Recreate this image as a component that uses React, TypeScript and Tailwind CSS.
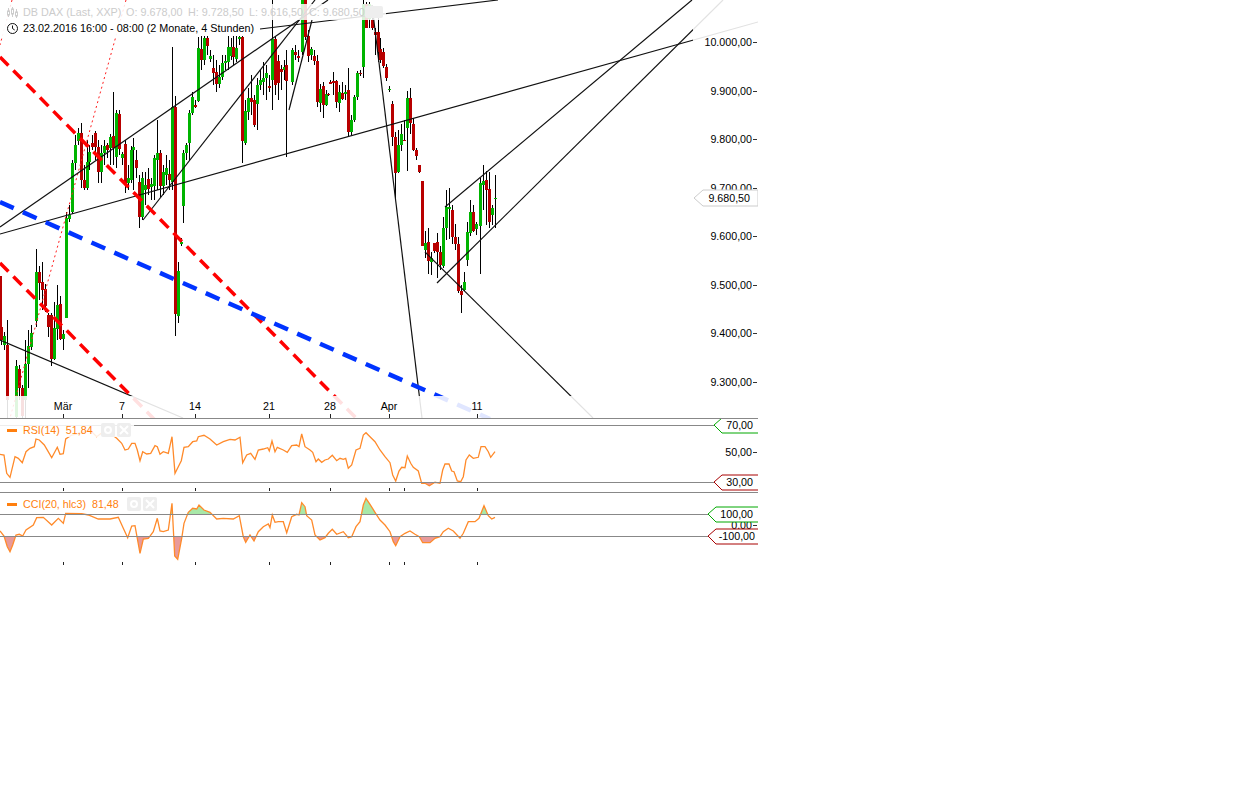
import { Fragment } from 'react';

type Candle = [number, number, number, 'g' | 'r', number, number];
type Pt = [number, number];

// x is in 3x zoom units, y in page pixels: [x, bodyTop, bodyBottom, colour, wickTop, wickBottom]
const candles: Candle[] = [
  [0, 276, 327, 'r', 276, 327], [4, 327, 340, 'r', 316, 345], [13, 336, 345, 'g', 332, 350], [22, 345, 400, 'r', 320, 418],
  [49, 366, 417, 'g', 360, 418], [58, 369, 388, 'r', 365, 400], [67, 388, 416, 'r', 385, 418], [76, 364, 400, 'g', 340, 418],
  [85, 346, 364, 'g', 330, 388], [94, 333, 347, 'g', 325, 350], [108, 272, 321, 'g', 249, 327], [118, 272, 283, 'r', 266, 300],
  [127, 282, 290, 'r', 262, 310], [136, 289, 306, 'r', 284, 312], [145, 315, 327, 'r', 313, 337], [154, 315, 359, 'r', 313, 366],
  [163, 328, 359, 'g', 302, 360], [172, 305, 329, 'g', 285, 340], [181, 304, 339, 'r', 296, 340], [190, 334, 339, 'g', 330, 350],
  [199, 218, 318, 'g', 212, 318], [208, 215, 219, 'g', 205, 222], [217, 163, 212, 'g', 160, 214], [226, 145, 163, 'g', 135, 170],
  [235, 133, 141, 'g', 128, 145], [244, 133, 180, 'r', 123, 188], [252, 180, 188, 'r', 165, 190], [260, 162, 188, 'g', 140, 190],
  [268, 152, 162, 'g', 145, 170], [277, 143, 147, 'r', 135, 150], [286, 133, 147, 'r', 131, 160], [295, 147, 172, 'r', 140, 183],
  [304, 153, 172, 'g', 145, 183], [313, 146, 153, 'g', 140, 165], [322, 145, 150, 'r', 143, 158], [331, 137, 148, 'g', 134, 165],
  [340, 136, 148, 'r', 92, 165], [349, 113, 157, 'g', 110, 168], [358, 114, 149, 'r', 110, 155], [367, 154, 158, 'g', 152, 165],
  [376, 144, 183, 'r', 140, 193], [385, 178, 183, 'g', 165, 190], [394, 150, 180, 'g', 146, 183], [400, 147, 150, 'g', 138, 190],
  [409, 160, 168, 'r', 150, 178], [418, 182, 217, 'r', 175, 228], [427, 178, 217, 'g', 172, 220], [436, 185, 190, 'g', 172, 205],
  [445, 179, 189, 'r', 168, 195], [454, 184, 187, 'g', 178, 200], [463, 158, 186, 'g', 155, 200], [472, 153, 160, 'g', 120, 190],
  [481, 153, 186, 'r', 150, 197], [490, 172, 186, 'g', 165, 195], [499, 168, 175, 'g', 155, 185], [508, 174, 180, 'r', 160, 190],
  [517, 107, 182, 'g', 47, 190], [526, 107, 314, 'r', 96, 336], [535, 271, 316, 'g', 262, 323], [544, 242, 244, 'g', 238, 246],
  [550, 153, 206, 'g', 150, 223], [559, 145, 153, 'g', 143, 160], [568, 113, 143, 'g', 110, 160], [577, 97, 113, 'g', 92, 115],
  [586, 105, 107, 'r', 100, 108], [595, 48, 101, 'g', 37, 102], [604, 49, 60, 'r', 36, 70], [613, 38, 60, 'g', 36, 65],
  [622, 38, 46, 'r', 36, 55], [631, 56, 59, 'g', 50, 62], [640, 68, 73, 'r', 55, 85], [649, 72, 84, 'r', 60, 92],
  [658, 77, 84, 'g', 65, 88], [667, 63, 77, 'g', 55, 80], [676, 61, 63, 'g', 55, 70], [685, 47, 62, 'g', 36, 70],
  [692, 47, 56, 'g', 38, 60], [700, 47, 57, 'r', 36, 65], [709, 48, 59, 'g', 36, 62], [718, 37, 39, 'g', 36, 45],
  [727, 37, 141, 'r', 36, 163], [736, 111, 143, 'g', 100, 145], [745, 98, 112, 'g', 88, 120], [754, 98, 102, 'r', 75, 115],
  [763, 100, 125, 'r', 95, 127], [772, 85, 104, 'g', 78, 130], [781, 80, 85, 'g', 70, 90], [790, 78, 82, 'g', 62, 95],
  [799, 73, 78, 'g', 65, 100], [808, 86, 88, 'r', 75, 92], [817, 39, 80, 'g', 0, 110], [826, 39, 85, 'r', 36, 95],
  [835, 61, 83, 'r', 55, 100], [844, 69, 72, 'r', 65, 90], [851, 67, 70, 'g', 60, 80], [859, 65, 81, 'r', 50, 157],
  [877, 50, 82, 'g', 48, 85], [886, 52, 55, 'r', 45, 60], [895, 56, 58, 'r', 50, 62], [905, 0, 52, 'g', 0, 55],
  [914, 0, 37, 'r', 0, 40], [923, 36, 56, 'r', 30, 62], [932, 49, 55, 'g', 47, 60], [941, 56, 61, 'r', 50, 65],
  [950, 61, 102, 'r', 55, 107], [959, 89, 103, 'g', 84, 112], [968, 86, 105, 'r', 82, 118], [977, 94, 105, 'g', 90, 106],
  [985, 94, 95, 'r', 93, 96], [991, 82, 84, 'r', 80, 84], [1000, 81, 83, 'r', 72, 95], [1009, 81, 102, 'r', 80, 108],
  [1018, 92, 103, 'g', 85, 112], [1027, 93, 99, 'r', 82, 100], [1036, 92, 94, 'g', 85, 100], [1045, 90, 132, 'r', 68, 136],
  [1054, 120, 132, 'g', 115, 135], [1063, 97, 120, 'g', 95, 122], [1072, 73, 97, 'g', 71, 100], [1081, 73, 74, 'r', 70, 76],
  [1090, 4, 67, 'g', 0, 78], [1099, 4, 28, 'r', 2, 28], [1108, 4, 19, 'g', 2, 28], [1117, 20, 28, 'r', 8, 30],
  [1126, 32, 35, 'r', 28, 55], [1135, 32, 52, 'r', 18, 62], [1141, 49, 60, 'r', 38, 63], [1150, 52, 66, 'r', 48, 68],
  [1159, 67, 78, 'r', 64, 81], [1168, 89, 90, 'g', 86, 92], [1177, 104, 137, 'r', 101, 146], [1186, 137, 173, 'r', 132, 200],
  [1195, 145, 172, 'g', 130, 173], [1204, 134, 145, 'g', 124, 151], [1213, 140, 141, 'r', 120, 141], [1222, 98, 128, 'g', 91, 171],
  [1231, 98, 123, 'r', 88, 134], [1240, 124, 150, 'r', 118, 151], [1249, 150, 156, 'r', 148, 160], [1258, 165, 172, 'r', 165, 173],
  [1267, 181, 246, 'r', 181, 246], [1275, 243, 250, 'g', 231, 258], [1283, 242, 261, 'r', 228, 274], [1292, 258, 262, 'g', 252, 275],
  [1301, 243, 251, 'r', 243, 253], [1310, 242, 252, 'r', 233, 278], [1319, 252, 265, 'r', 246, 270], [1328, 228, 266, 'g', 217, 268],
  [1337, 207, 228, 'g', 190, 240], [1346, 207, 209, 'g', 188, 239], [1355, 210, 237, 'r', 205, 244], [1364, 237, 244, 'r', 224, 250],
  [1373, 244, 291, 'r', 237, 293], [1382, 291, 295, 'r', 285, 313], [1391, 282, 290, 'g', 272, 291], [1400, 232, 260, 'g', 222, 266],
  [1409, 212, 233, 'g', 200, 236], [1418, 212, 231, 'r', 205, 232], [1427, 224, 229, 'g', 222, 235], [1441, 183, 226, 'g', 178, 274],
  [1450, 181, 185, 'g', 165, 210], [1459, 180, 190, 'r', 171, 225], [1468, 189, 222, 'r', 172, 228], [1477, 208, 215, 'g', 205, 225],
  [1486, 198, 199, 'g', 175, 228],
];

// trend lines, [x1, y1, x2, y2]
const blackLines = [
  [0, 227, 328, 0], [0, 234, 758, 22], [260, 29, 498, 0], [143, 220, 315, 0], [289, 110, 312, 20],
  [372, 5, 422, 418], [0, 340, 183, 418], [445, 207, 692, 0], [437, 283, 723, 0], [425, 252, 593, 418],
];
const redLines = [[0, 57, 360, 422], [0, 263, 155, 420]];
const dottedLines = [[12, 0, 0, 45], [126, 0, 10, 418]];

const rsiZoom: Pt[] = [
  [0, 178], [12, 180], [20, 235], [30, 247], [45, 185], [55, 190], [67, 203], [78, 170], [90, 160], [103, 155], [108, 132],
  [118, 135], [133, 150], [155, 188], [172, 157], [180, 178], [190, 176], [197, 132], [215, 120], [240, 115], [270, 105],
  [290, 125], [310, 110], [330, 115], [350, 130], [365, 145], [375, 165], [385, 162], [395, 145], [405, 145], [412, 165],
  [420, 197], [428, 170], [440, 177], [452, 175], [465, 152], [472, 155], [480, 178], [490, 170], [505, 175], [516, 125],
  [525, 235], [535, 215], [544, 197], [552, 157], [565, 155], [578, 140], [590, 138], [595, 125], [612, 121], [630, 132],
  [650, 150], [670, 140], [690, 133], [705, 135], [720, 127], [728, 203], [740, 180], [752, 175], [765, 193], [775, 165],
  [790, 162], [803, 158], [808, 168], [816, 138], [825, 170], [832, 157], [850, 165], [862, 172], [875, 152], [890, 150],
  [897, 155], [905, 117], [915, 155], [930, 165], [938, 172], [948, 200], [955, 192], [965, 202], [975, 195], [985, 192],
  [997, 181], [1010, 197], [1020, 190], [1030, 193], [1037, 190], [1045, 220], [1055, 210], [1068, 165], [1080, 160],
  [1090, 120], [1098, 113], [1110, 125], [1125, 140], [1140, 165], [1155, 185], [1170, 203], [1178, 240], [1187, 258],
  [1197, 228], [1205, 217], [1215, 218], [1222, 183], [1232, 205], [1240, 217], [1255, 228], [1265, 265], [1275, 265],
  [1288, 272], [1305, 262], [1320, 265], [1328, 225], [1335, 207], [1347, 207], [1355, 228], [1362, 230], [1372, 258],
  [1382, 260], [1390, 245], [1398, 195], [1408, 180], [1420, 190], [1435, 187], [1443, 155], [1455, 155], [1465, 170],
  [1472, 187], [1485, 170],
];

const cciZoom: Pt[] = [
  [0, 408], [12, 423], [22, 455], [30, 470], [38, 450], [48, 420], [58, 418], [68, 423], [78, 405], [100, 390], [110, 368],
  [130, 367], [155, 390], [175, 370], [190, 385], [197, 355], [245, 356], [265, 360], [295, 372], [330, 372], [355, 367],
  [370, 400], [383, 428], [395, 393], [405, 392], [420, 475], [430, 432], [445, 430], [460, 410], [472, 370], [480, 408],
  [490, 410], [505, 405], [516, 325], [524, 483], [533, 493], [545, 430], [552, 385], [565, 352], [578, 340], [590, 342],
  [597, 330], [612, 345], [630, 352], [650, 372], [670, 370], [700, 372], [718, 362], [730, 425], [737, 442], [750, 420],
  [762, 438], [775, 410], [790, 395], [805, 387], [810, 398], [817, 360], [825, 382], [835, 380], [850, 380], [860, 413],
  [875, 365], [890, 358], [897, 360], [905, 323], [915, 335], [920, 362], [935, 375], [945, 420], [960, 435], [975, 428],
  [985, 415], [997, 403], [1010, 418], [1030, 410], [1045, 428], [1055, 425], [1068, 395], [1080, 380], [1090, 330],
  [1098, 310], [1110, 328], [1125, 352], [1140, 375], [1155, 390], [1170, 410], [1180, 440], [1187, 452], [1200, 425],
  [1215, 415], [1230, 408], [1245, 418], [1258, 425], [1268, 443], [1290, 443], [1305, 430], [1320, 425], [1330, 410],
  [1345, 400], [1360, 408], [1380, 430], [1390, 415], [1405, 380], [1425, 380], [1437, 370], [1452, 332], [1465, 362],
  [1475, 372], [1485, 367],
];

const toPage = (pts: Pt[]) => pts.map(([x, y]) => `${(x / 3).toFixed(1)},${(395 + y / 3).toFixed(1)}`).join(' ');
const closeAt = (pts: Pt[], y: number) => {
  const first = pts[0][0] / 3;
  const last = pts[pts.length - 1][0] / 3;
  return `${first},${y} ${toPage(pts)} ${last},${y}`;
};

const prices = [
  ['10.000,00', 42], ['9.900,00', 91], ['9.800,00', 139], ['9.700,00', 188],
  ['9.600,00', 236], ['9.500,00', 285], ['9.400,00', 333], ['9.300,00', 382],
] as const;
const dates = [['Mär', 63], ['7', 122], ['14', 195], ['21', 269], ['28', 330], ['Apr', 389], ['11', 477]] as const;
const subTicks = [63, 122, 195, 269, 330, 389, 404, 477];

function MainChart() {
  return (
    <svg className="absolute inset-0" width={758} height={418} viewBox="0 0 758 418">
      <g shapeRendering="crispEdges">
        {candles.map(([zx, , , , wt, wb], i) => (
          <rect key={i} x={Math.round(zx / 3)} y={wt} width={1} height={wb - wt} fill="#000" />
        ))}
        {candles.map(([zx, bt, bb, c], i) => (
          <rect key={i} x={Math.round(zx / 3) - 1} y={bt} width={3} height={Math.max(bb - bt, 1)} fill={c === 'g' ? '#00b400' : '#b80000'} />
        ))}
      </g>
      {dottedLines.map(([a, b, c, d], i) => (
        <line key={i} x1={a} y1={b} x2={c} y2={d} stroke="#ff2020" strokeWidth={1} strokeDasharray="2 3" />
      ))}
      {blackLines.map(([a, b, c, d], i) => (
        <line key={i} x1={a} y1={b} x2={c} y2={d} stroke="#111" strokeWidth={1.2} />
      ))}
      {redLines.map(([a, b, c, d], i) => (
        <line key={i} x1={a} y1={b} x2={c} y2={d} stroke="#ff0000" strokeWidth={3.5} strokeDasharray="12 7" />
      ))}
      <line x1={0} y1={202} x2={490} y2={419} stroke="#0033ff" strokeWidth={4.5} strokeDasharray="15 10" />

      {/* faded strips under the axes */}
      <rect x={0} y={396} width={758} height={22} fill="#fff" fillOpacity={0.88} />
      <rect x={693} y={0} width={65} height={418} fill="#fff" fillOpacity={0.88} />

      {prices.map(([label, y]) => (
        <Fragment key={label}>
          <text x={752} y={y + 4} textAnchor="end" fontSize={10.7} fill="#000">{label}</text>
          <rect x={753} y={y} width={4} height={1} fill="#333" />
        </Fragment>
      ))}
      {dates.map(([label, x]) => (
        <Fragment key={label}>
          <text x={x} y={410} textAnchor="middle" fontSize={10.7} fill="#000">{label}</text>
          <rect x={x} y={414} width={1} height={4} fill="#222" />
        </Fragment>
      ))}

      <polygon points="758,190 703,190 694,198 703,206 758,206" fill="#fff" stroke="#ccc" />
      <text x={750} y={202} textAnchor="end" fontSize={10.7} fill="#000">9.680,50</text>
    </svg>
  );
}

function TagLabel({ text, y, tip, color, right = 753 }: { text: string; y: number; tip: number; color: string; right?: number }) {
  return (
    <>
      <polyline points={`758,${y - 7} ${tip + 8},${y - 7} ${tip},${y} ${tip + 8},${y + 8} 758,${y + 8}`} fill="#fff" stroke={color} />
      <text x={right} y={y + 4} textAnchor="end" fontSize={10.7} fill="#000">{text}</text>
    </>
  );
}

function IndicatorButtons() {
  return (
    <div className="flex gap-[2px]">
      <svg width={14} height={14} viewBox="0 0 14 14">
        <rect width={14} height={14} rx={2} fill="#eee" />
        <circle cx={7} cy={7} r={3} fill="none" stroke="#fff" strokeWidth={2} />
      </svg>
      <svg width={14} height={14} viewBox="0 0 14 14">
        <rect width={14} height={14} rx={2} fill="#eee" />
        <path d="M3 3 11 11M11 3 3 11" stroke="#fff" strokeWidth={2} />
      </svg>
    </div>
  );
}

function IndicatorLegend({ name, value, width }: { name: string; value: string; width: string }) {
  return (
    <div className={`absolute left-0 top-[4px] flex h-[14px] items-center bg-white/85 pl-[7px] text-[10.7px] text-[#ff7f0e] ${width}`}>
      <span className="mr-[6px] h-[3px] w-[10px] bg-[#ff7f0e]" />
      <span>{name}</span>
      <span className="ml-[6px] mr-[8px]">{value}</span>
      <IndicatorButtons />
    </div>
  );
}

function RsiPane() {
  return (
    <div className="relative h-[74px] border-t border-[#888]">
      <svg className="absolute inset-0" width={758} height={73} viewBox="0 419 758 73">
        <clipPath id="rsi-low"><rect x={0} y={482} width={758} height={10} /></clipPath>
        <polygon points={closeAt(rsiZoom, 482)} fill="#e89a9a" clipPath="url(#rsi-low)" />
        <polyline points={toPage(rsiZoom)} fill="none" stroke="#ff8a2a" strokeWidth={1.3} />
        <rect x={0} y={425} width={758} height={1} fill="#888" />
        <rect x={0} y={482} width={758} height={1} fill="#888" />
        {subTicks.map((x) => <rect key={x} x={x} y={488} width={1} height={3} fill="#222" />)}
        <text x={752} y={456} textAnchor="end" fontSize={10.7} fill="#000">50,00</text>
        <rect x={753} y={452} width={4} height={1} fill="#333" />
        <TagLabel text="70,00" y={425} tip={714} color="#00a800" />
        <TagLabel text="30,00" y={482} tip={714} color="#a80000" />
      </svg>
      <IndicatorLegend name="RSI(14)" value="51,84" width="w-[134px]" />
    </div>
  );
}

function CciPane() {
  return (
    <div className="relative h-[73px] border-t border-[#888]">
      <svg className="absolute inset-0" width={758} height={72} viewBox="0 493 758 72">
        <clipPath id="cci-high"><rect x={0} y={493} width={758} height={21} /></clipPath>
        <clipPath id="cci-low"><rect x={0} y={536} width={758} height={29} /></clipPath>
        <polygon points={closeAt(cciZoom, 514)} fill="#a8e8a8" clipPath="url(#cci-high)" />
        <polygon points={closeAt(cciZoom, 536)} fill="#e89a9a" clipPath="url(#cci-low)" />
        <polyline points={toPage(cciZoom)} fill="none" stroke="#ff8a2a" strokeWidth={1.3} />
        <rect x={0} y={514} width={758} height={1} fill="#888" />
        <rect x={0} y={536} width={758} height={1} fill="#888" />
        {subTicks.map((x) => <rect key={x} x={x} y={562} width={1} height={3} fill="#222" />)}
        <text x={752} y={529} textAnchor="end" fontSize={10.7} fill="#000">0,00</text>
        <rect x={753} y={525} width={4} height={1} fill="#333" />
        <TagLabel text="100,00" y={514} tip={708} color="#00a800" />
        <TagLabel text="-100,00" y={536} tip={708} color="#a80000" right={755} />
      </svg>
      <IndicatorLegend name="CCI(20, hlc3)" value="81,48" width="w-[158px]" />
    </div>
  );
}

function ChartLegend() {
  return (
    <div className="absolute left-0 top-[4px] flex flex-col text-[10.8px]">
      <div className="flex h-[16px] w-[386px] items-center bg-white/85 pl-[7px] text-[#ccc]">
        <svg width={11} height={11} viewBox="0 0 11 11" className="mr-[5px]">
          <path d="M1.5 1v9M5.5 0v10M9.5 2v9" stroke="#ccc" />
          <rect x={0.5} y={4} width={2} height={4} fill="#fff" stroke="#ccc" />
          <rect x={4.5} y={2} width={2} height={5} fill="#fff" stroke="#ccc" />
          <rect x={8.5} y={5} width={2} height={4} fill="#fff" stroke="#ccc" />
        </svg>
        <span className="w-[103px]">DB DAX (Last, XXP)</span>
        <span className="w-[62px]">O: 9.678,00</span>
        <span className="w-[61px]">H: 9.728,50</span>
        <span className="w-[60px]">L: 9.616,50</span>
        <span className="w-[56px]">C: 9.680,50</span>
        <span className="h-[12px] w-[18px] rounded-[2px] bg-[#eee]" />
      </div>
      <div className="flex h-[16px] w-[258px] items-center bg-white/95 pl-[7px] text-[#000]">
        <svg width={11} height={11} viewBox="0 0 11 11" className="mr-[5px]">
          <circle cx={5.5} cy={5.5} r={5} fill="none" stroke="#111" />
          <path d="M5.5 2.5v3l2.2 1.5" fill="none" stroke="#111" />
        </svg>
        <span>23.02.2016 16:00 - 08:00 (2 Monate, 4 Stunden)</span>
      </div>
    </div>
  );
}

export default function App() {
  return (
    <div className="h-[812px] w-full bg-white font-['Liberation_Sans',Arial,sans-serif]">
      <div className="flex w-[758px] flex-col">
        <div className="relative h-[418px] overflow-hidden">
          <MainChart />
          <ChartLegend />
        </div>
        <RsiPane />
        <CciPane />
      </div>
    </div>
  );
}
